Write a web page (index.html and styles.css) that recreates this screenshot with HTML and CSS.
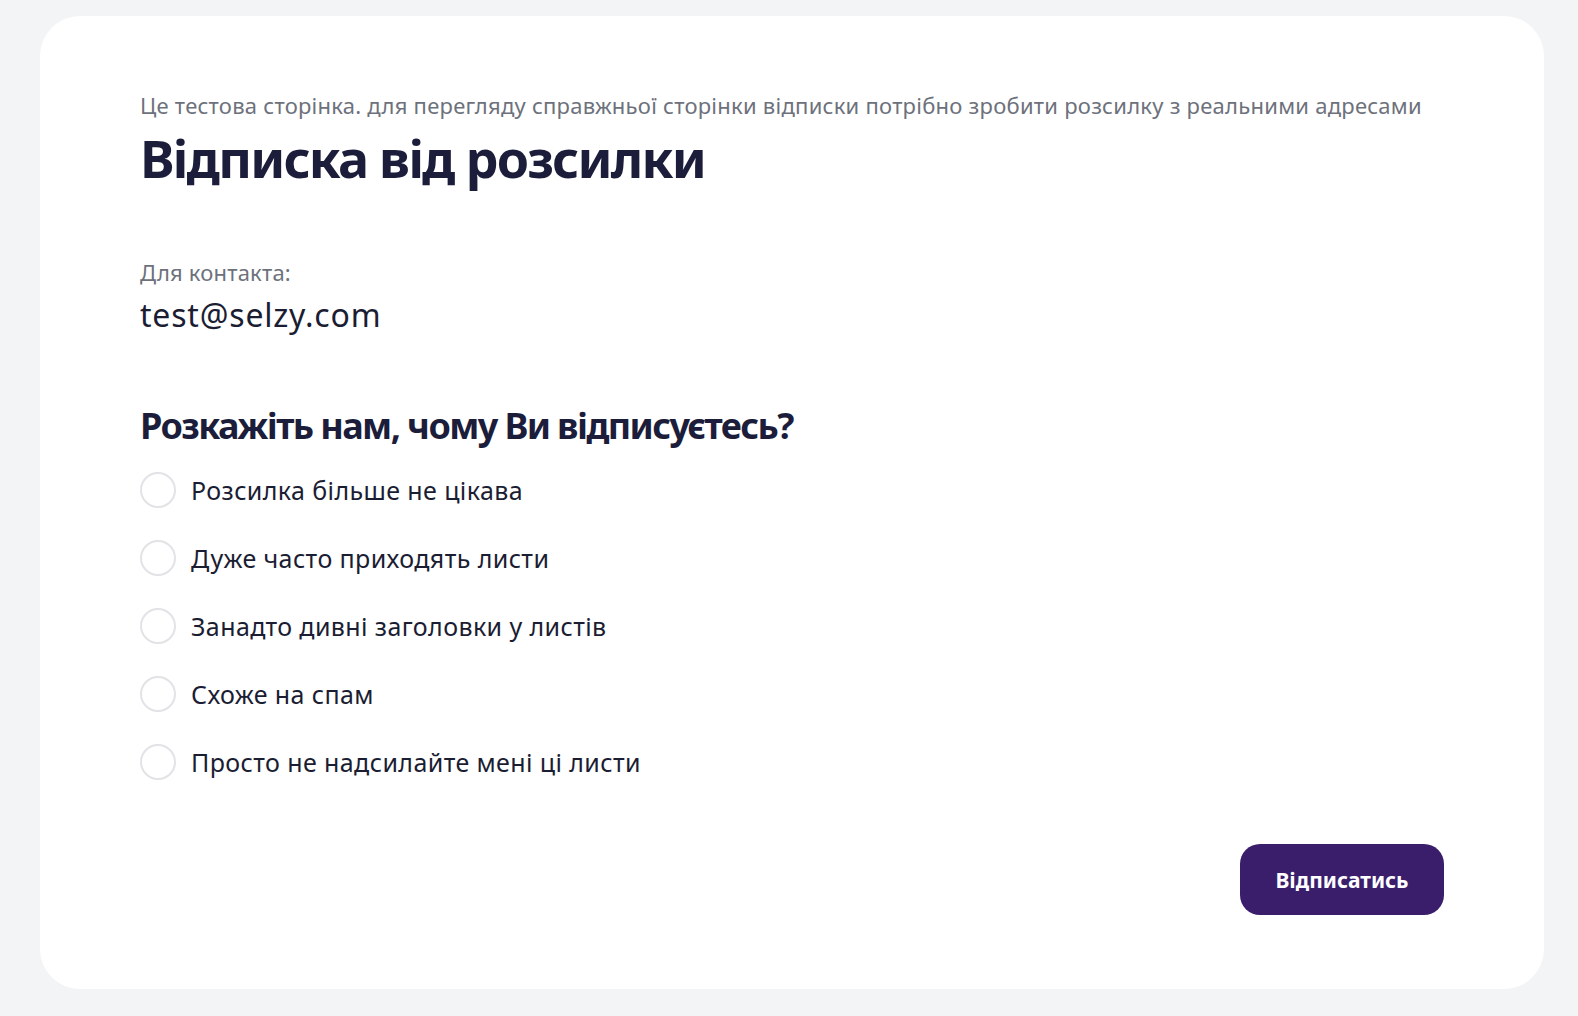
FILE: index.html
```html
<!DOCTYPE html>
<html lang="uk">
<head>
<meta charset="utf-8">
<title>Відписка від розсилки</title>
<link rel="stylesheet" href="styles.css">
</head>
<body>
<main class="card">
  <p class="note">Це тестова сторінка. для перегляду справжньої сторінки відписки потрібно зробити розсилку з реальними адресами</p>
  <h1 class="title">Відписка від розсилки</h1>
  <div class="contact">
    <div class="contact-label">Для контакта:</div>
    <div class="contact-email">test@selzy.com</div>
  </div>
  <h2 class="question">Розкажіть нам, чому Ви відписуєтесь?</h2>
  <ul class="options">
    <li class="option"><span class="radio"></span><span class="option-text">Розсилка більше не цікава</span></li>
    <li class="option"><span class="radio"></span><span class="option-text">Дуже часто приходять листи</span></li>
    <li class="option"><span class="radio"></span><span class="option-text">Занадто дивні заголовки у листів</span></li>
    <li class="option"><span class="radio"></span><span class="option-text">Схоже на спам</span></li>
    <li class="option"><span class="radio"></span><span class="option-text">Просто не надсилайте мені ці листи</span></li>
  </ul>
  <div class="actions">
    <button class="btn" type="button">Відписатись</button>
  </div>
</main>
</body>
</html>
```
FILE: styles.css
```css
html, body {
  margin: 0;
  padding: 0;
}
body {
  background: #f3f4f6;
  font-family: "Noto Sans", "Open Sans", sans-serif;
  color: #1b1d33;
  padding: 16px 34px 34px 40px;
}
.card {
  display: block;
  background: #ffffff;
  border-radius: 40px;
  padding: 75px 100px 74px 100px;
}
.note {
  margin: 0;
  font-size: 22px;
  line-height: 28px;
  color: #6d717c;
  letter-spacing: 0.25px;
}
.title {
  margin: 6px 0 0 0;
  font-size: 52px;
  line-height: 66px;
  font-weight: 700;
  color: #1b1d3a;
  letter-spacing: -1.8px;
}
.contact {
  margin-top: 67px;
}
.contact-label {
  font-size: 22px;
  line-height: 28px;
  color: #6d717c;
  letter-spacing: 0.2px;
}
.contact-email {
  margin-top: 9px;
  font-size: 32px;
  line-height: 40px;
  color: #1b1d33;
  letter-spacing: 0.8px;
}
.question {
  margin: 67px 0 0 0;
  font-size: 36px;
  line-height: 48px;
  font-weight: 700;
  color: #1b1d3a;
  letter-spacing: -1.6px;
}
.options {
  list-style: none;
  margin: 22px 0 0 0;
  padding: 0;
  display: flex;
  flex-direction: column;
  gap: 32px;
}
.option {
  display: flex;
  align-items: center;
  gap: 15px;
  height: 36px;
}
.radio {
  width: 32px;
  height: 32px;
  border: 2px solid #e2e3e6;
  border-radius: 50%;
  flex: none;
}
.option-text {
  font-size: 25px;
  line-height: 32px;
  color: #1b1d33;
  letter-spacing: 0.4px;
}
.actions {
  display: flex;
  justify-content: flex-end;
  margin-top: 64px;
}
.btn {
  width: 204px;
  height: 71px;
  border: none;
  border-radius: 20px;
  background: #3a1e6c;
  color: #ffffff;
  font-family: inherit;
  font-size: 21px;
  font-weight: 700;
  cursor: pointer;
}
```
